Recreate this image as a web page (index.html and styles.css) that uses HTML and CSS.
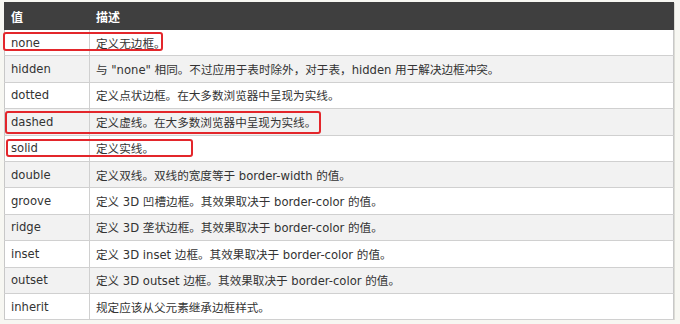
FILE: index.html
```html
<!DOCTYPE html>
<html lang="zh-CN">
<head>
<meta charset="utf-8">
<title>border-style 值</title>
<link rel="stylesheet" href="styles.css">
</head>
<body>
<div class="wrap">
  <table class="ref">
    <thead>
      <tr><th class="c1">值</th><th>描述</th></tr>
    </thead>
    <tbody>
      <tr><td class="c1">none</td><td>定义无边框。</td></tr>
      <tr class="alt"><td class="c1">hidden</td><td>与 "none" 相同。不过应用于表时除外，对于表，hidden 用于解决边框冲突。</td></tr>
      <tr><td class="c1">dotted</td><td>定义点状边框。在大多数浏览器中呈现为实线。</td></tr>
      <tr class="alt"><td class="c1">dashed</td><td>定义虚线。在大多数浏览器中呈现为实线。</td></tr>
      <tr><td class="c1">solid</td><td>定义实线。</td></tr>
      <tr class="alt"><td class="c1">double</td><td>定义双线。双线的宽度等于 border-width 的值。</td></tr>
      <tr><td class="c1">groove</td><td>定义 3D 凹槽边框。其效果取决于 border-color 的值。</td></tr>
      <tr class="alt"><td class="c1">ridge</td><td>定义 3D 垄状边框。其效果取决于 border-color 的值。</td></tr>
      <tr><td class="c1">inset</td><td>定义 3D inset 边框。其效果取决于 border-color 的值。</td></tr>
      <tr class="alt"><td class="c1">outset</td><td>定义 3D outset 边框。其效果取决于 border-color 的值。</td></tr>
      <tr><td class="c1">inherit</td><td>规定应该从父元素继承边框样式。</td></tr>
    </tbody>
  </table>
  <div class="mark mark-none"></div>
  <div class="mark mark-dashed"></div>
  <div class="mark mark-solid"></div>
</div>
</body>
</html>
```

FILE: styles.css
```css
html, body {
  margin: 0;
  padding: 0;
  background: #f7f7f2;
}
body {
  padding: 2px 6px 0 4px;
  font-family: "DejaVu Sans", "Noto Sans CJK SC", sans-serif;
  font-size: 11.6px;
  color: #333333;
}
.wrap {
  position: relative;
  width: 670px;
}
.ref {
  width: 670px;
  table-layout: fixed;
  border-collapse: collapse;
  background: #ffffff;
  border: 1px solid #c8c8c8;
  box-shadow: 1px 1px 0 #dcdcd6;
}
.ref th {
  background: #3f3f3f;
  color: #ffffff;
  font-weight: bold;
  text-align: left;
  height: 26px;
  padding: 0 0 0 6px;
  border: 1px solid #3f3f3f;
  font-size: 12px;
}
.ref td {
  height: 26.4px;
  padding: 0 0 0 6px;
  border-top: 1px solid #d0d0d0;
  border-bottom: 1px solid #d0d0d0;
  border-left: 1px solid #d0d0d0;
  vertical-align: middle;
  box-sizing: border-box;
  white-space: nowrap;
}
.ref .c1 {
  width: 78px;
}
.ref td.c1 {
  border-left: none;
}
.ref tr.alt td {
  background: #f2f2f2;
}
.mark {
  position: absolute;
  border: 2px solid #e3262b;
  border-radius: 3px;
  box-sizing: border-box;
}
.mark-none {
  left: -1px;
  top: 30px;
  width: 160px;
  height: 19px;
}
.mark-dashed {
  left: 1px;
  top: 109px;
  width: 316px;
  height: 23px;
}
.mark-solid {
  left: 2px;
  top: 137px;
  width: 187px;
  height: 18px;
}
```
